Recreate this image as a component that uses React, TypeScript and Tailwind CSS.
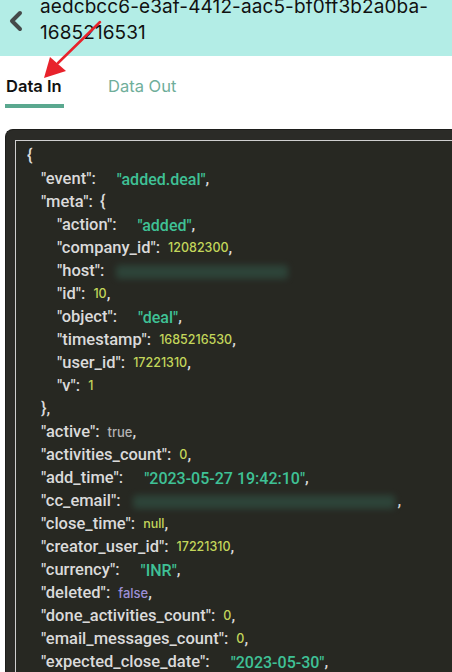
type Kind = 'str' | 'num' | 'true' | 'false' | 'null' | 'blur' | 'open' | 'close' | 'brace'

interface Line {
  indent: number
  k?: string
  kind: Kind
  v?: string
  w?: number
  comma?: boolean
}

const LINES: Line[] = [
  { indent: 0, kind: 'brace', v: '{' },
  { indent: 1, k: 'event', kind: 'str', v: 'added.deal', comma: true },
  { indent: 1, k: 'meta', kind: 'open' },
  { indent: 2, k: 'action', kind: 'str', v: 'added', comma: true },
  { indent: 2, k: 'company_id', kind: 'num', v: '12082300', comma: true },
  { indent: 2, k: 'host', kind: 'blur', w: 172 },
  { indent: 2, k: 'id', kind: 'num', v: '10', comma: true },
  { indent: 2, k: 'object', kind: 'str', v: 'deal', comma: true },
  { indent: 2, k: 'timestamp', kind: 'num', v: '1685216530', comma: true },
  { indent: 2, k: 'user_id', kind: 'num', v: '17221310', comma: true },
  { indent: 2, k: 'v', kind: 'num', v: '1' },
  { indent: 1, kind: 'close', v: '},' },
  { indent: 1, k: 'active', kind: 'true', v: 'true', comma: true },
  { indent: 1, k: 'activities_count', kind: 'num', v: '0', comma: true },
  { indent: 1, k: 'add_time', kind: 'str', v: '2023-05-27 19:42:10', comma: true },
  { indent: 1, k: 'cc_email', kind: 'blur', w: 262, comma: true },
  { indent: 1, k: 'close_time', kind: 'null', v: 'null', comma: true },
  { indent: 1, k: 'creator_user_id', kind: 'num', v: '17221310', comma: true },
  { indent: 1, k: 'currency', kind: 'str', v: 'INR', comma: true },
  { indent: 1, k: 'deleted', kind: 'false', v: 'false', comma: true },
  { indent: 1, k: 'done_activities_count', kind: 'num', v: '0', comma: true },
  { indent: 1, k: 'email_messages_count', kind: 'num', v: '0', comma: true },
  { indent: 1, k: 'expected_close_date', kind: 'str', v: '2023-05-30', comma: true },
  { indent: 1, k: 'files_count', kind: 'num', v: '0', comma: true },
]

const INDENT = ['pl-0', 'pl-[14px]', 'pl-[30px]']

function Value({ line }: { line: Line }) {
  switch (line.kind) {
    case 'str':
      return <span className="ml-[21px] text-[16px] font-medium text-[#3fc196]">"{line.v}"</span>
    case 'num':
    case 'null':
      return <span className="ml-[8px] text-[12.5px] text-[#c3d65a] font-['Inter',sans-serif]">{line.v}</span>
    case 'true':
      return <span className="ml-[8px] text-[13px] text-[#b4b4b4] font-['Inter',sans-serif]">{line.v}</span>
    case 'false':
      return <span className="ml-[8px] text-[13px] text-[#9c8fd8] font-['Inter',sans-serif]">{line.v}</span>
    case 'blur':
      return (
        <span
          className="ml-[12px] h-[14px] rounded-sm bg-[#2f4a3e] blur-[3px] opacity-80"
          style={{ width: line.w }}
        />
      )
    case 'open':
      return <span className="ml-[7px]">{'{'}</span>
    default:
      return null
  }
}

export default function App() {
  return (
    <div className="relative w-[452px] h-[672px] overflow-hidden bg-white font-['Roboto',sans-serif]">
      {/* header */}
      <div className="flex items-start gap-[14px] bg-[#b3ede6] pl-[6px] pr-2 h-[56px] overflow-hidden">
        <svg width="20" height="24" viewBox="0 0 20 24" className="mt-[9px] shrink-0">
          <path d="M14 4 L6 12 L14 20" fill="none" stroke="#454a4a" strokeWidth="4" strokeLinecap="round" strokeLinejoin="round" />
        </svg>
        <div className="-mt-[6px] text-[19px] leading-[26px] text-[#111] font-['Inter',sans-serif] tracking-[0.1px] break-all">
          aedcbcc6-e3af-4412-aac5-bf0ff3b2a0ba-
          <br />
          1685216531
        </div>
      </div>

      {/* tabs */}
      <div className="flex items-start gap-[44px] pl-[5px] pt-[18px]">
        <div className="flex flex-col items-start">
          <span className="px-[1px] text-[16.5px] leading-[24px] font-semibold text-[#111] font-['Inter',sans-serif]">Data In</span>
          <span className="mt-[6px] h-[4px] w-[59px] bg-[#5aa88f]" />
        </div>
        <span className="text-[16.5px] leading-[24px] text-[#6fae9a] font-['Inter',sans-serif]">Data Out</span>
      </div>

      {/* code panel */}
      <div className="ml-[5px] mt-[21px] rounded-tl-[8px] bg-[#2b2b27] pt-[10px] pl-[9px] border-t border-l border-[#1e1e1c]">
        <div className="border-t border-l border-[#cfcfcf] bg-[#272822] pt-[4px] pl-[11px] text-[16.5px] font-medium text-[#dadada]">
          {LINES.map((line, i) => (
            <div key={i} className={`flex items-center h-[23px] whitespace-nowrap ${INDENT[line.indent]}`}>
              {line.k ? <span>"{line.k}":</span> : <span>{line.v}</span>}
              {line.k && <Value line={line} />}
              {line.comma && <span className={line.kind === 'blur' ? 'ml-[3px]' : ''}>,</span>}
            </div>
          ))}
        </div>
      </div>

      {/* annotation arrow */}
      <svg className="absolute left-0 top-0 pointer-events-none" width="120" height="90" viewBox="0 0 120 90">
        <line x1="100" y1="22" x2="58" y2="63" stroke="#e8222b" strokeWidth="2.5" strokeLinecap="round" />
        <polygon points="44,78 50,57 66,71" fill="#e8222b" />
      </svg>
    </div>
  )
}
